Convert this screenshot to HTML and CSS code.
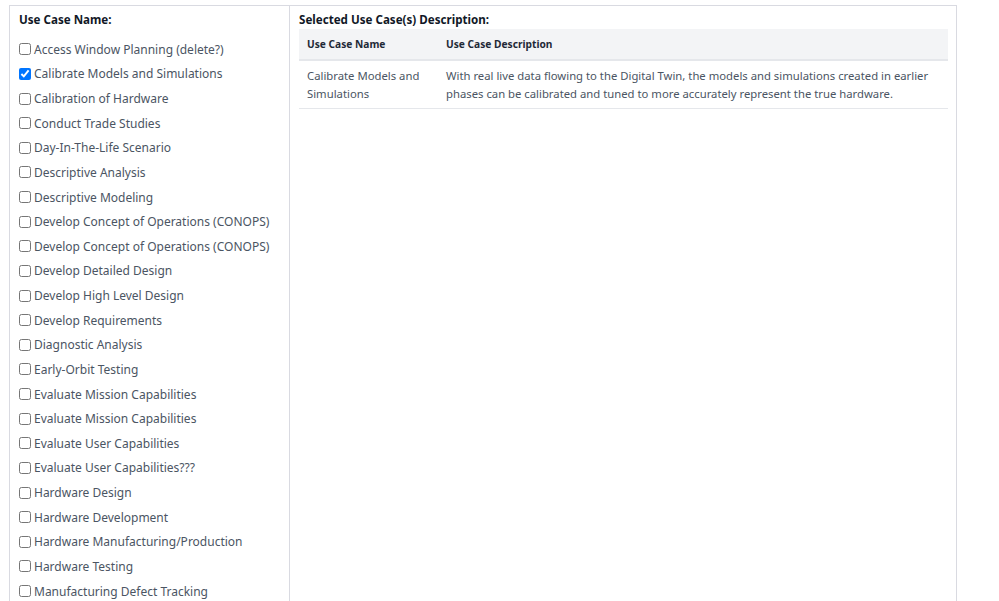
FILE: index.html
```html
<!DOCTYPE html>
<html>
<head>
<meta charset="utf-8">
<link rel="stylesheet" href="styles.css">
</head>
<body>
<div class="panel">
  <div class="left">
    <div class="heading">Use Case Name:</div>
    <ul class="list">
      <li><label><input type="checkbox">Access Window Planning (delete?)</label></li>
      <li><label><input type="checkbox" checked>Calibrate Models and Simulations</label></li>
      <li><label><input type="checkbox">Calibration of Hardware</label></li>
      <li><label><input type="checkbox">Conduct Trade Studies</label></li>
      <li><label><input type="checkbox">Day-In-The-Life Scenario</label></li>
      <li><label><input type="checkbox">Descriptive Analysis</label></li>
      <li><label><input type="checkbox">Descriptive Modeling</label></li>
      <li><label><input type="checkbox">Develop Concept of Operations (CONOPS)</label></li>
      <li><label><input type="checkbox">Develop Concept of Operations (CONOPS)</label></li>
      <li><label><input type="checkbox">Develop Detailed Design</label></li>
      <li><label><input type="checkbox">Develop High Level Design</label></li>
      <li><label><input type="checkbox">Develop Requirements</label></li>
      <li><label><input type="checkbox">Diagnostic Analysis</label></li>
      <li><label><input type="checkbox">Early-Orbit Testing</label></li>
      <li><label><input type="checkbox">Evaluate Mission Capabilities</label></li>
      <li><label><input type="checkbox">Evaluate Mission Capabilities</label></li>
      <li><label><input type="checkbox">Evaluate User Capabilities</label></li>
      <li><label><input type="checkbox">Evaluate User Capabilities???</label></li>
      <li><label><input type="checkbox">Hardware Design</label></li>
      <li><label><input type="checkbox">Hardware Development</label></li>
      <li><label><input type="checkbox">Hardware Manufacturing/Production</label></li>
      <li><label><input type="checkbox">Hardware Testing</label></li>
      <li><label><input type="checkbox">Manufacturing Defect Tracking</label></li>
    </ul>
  </div>
  <div class="right">
    <div class="heading">Selected Use Case(s) Description:</div>
    <table class="desc">
      <thead>
        <tr><th class="c1">Use Case Name</th><th>Use Case Description</th></tr>
      </thead>
      <tbody>
        <tr>
          <td class="c1">Calibrate Models and Simulations</td>
          <td>With real live data flowing to the Digital Twin, the models and simulations created in earlier phases can be calibrated and tuned to more accurately represent the true hardware.</td>
        </tr>
      </tbody>
    </table>
  </div>
</div>
</body>
</html>
```

FILE: styles.css
```css
html, body {
  margin: 0;
  padding: 0;
  background: #ffffff;
  overflow: hidden;
}
body {
  font-family: "Noto Sans", "Open Sans", "Liberation Sans", sans-serif;
  color: #4b5563;
}
.panel {
  margin: 5px 0 0 9px;
  width: 946px;
  height: 620px;
  border: 1px solid #d9dae1;
  border-bottom: none;
  display: flex;
  align-items: stretch;
}
.left {
  width: 270px;
  padding: 5px 0 0 9px;
  border-right: 1px solid #d9dae1;
}
.right {
  flex: 1;
  padding: 5px 8px 0 9px;
}
.heading {
  font-size: 11.6px;
  font-weight: 700;
  line-height: 18px;
  color: #111827;
}
.left .heading {
  margin-bottom: 8px;
}
.list {
  list-style: none;
  margin: 0;
  padding: 0;
}
.list li {
  height: 24.64px;
  display: flex;
  align-items: center;
  font-size: 12px;
}
.list label {
  display: flex;
  align-items: center;
  white-space: nowrap;
}
.list input {
  width: 12px;
  height: 12px;
  margin: 0 3px 0 0;
}
.desc {
  width: 100%;
  border-collapse: collapse;
  font-size: 11.3px;
}
.desc th {
  background: #f3f4f6;
  color: #1f2937;
  font-size: 10.2px;
  font-weight: 700;
  text-align: left;
  height: 30px;
  padding: 0 8px;
  border-bottom: 2px solid #e5e7eb;
}
.desc td {
  padding: 6px 8px 5px;
  line-height: 18px;
  vertical-align: top;
  border-bottom: 1px solid #e5e7eb;
}
.desc .c1 {
  width: 123px;
}
```
